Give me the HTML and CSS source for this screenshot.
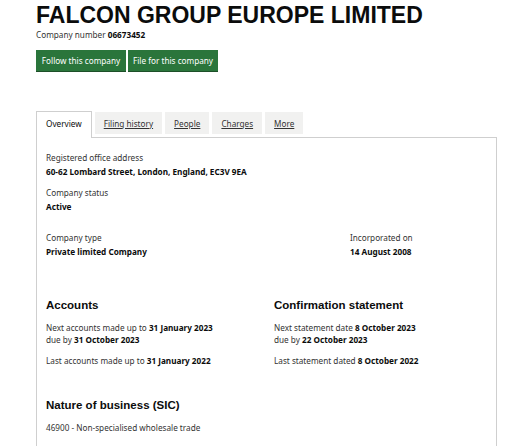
FILE: index.html
```html
<!DOCTYPE html>
<html lang="en">
<head>
<meta charset="utf-8">
<title>FALCON GROUP EUROPE LIMITED</title>
<link rel="stylesheet" href="styles.css">
</head>
<body>
<main class="page">
  <h1 class="title">FALCON GROUP EUROPE LIMITED</h1>
  <p class="company-number">Company number <strong>06673452</strong></p>
  <div class="actions">
    <a class="btn" href="#">Follow this company</a>
    <a class="btn" href="#">File for this company</a>
  </div>

  <nav class="tabs">
    <span class="tab tab-active">Overview</span>
    <a class="tab" href="#">Filing history</a>
    <a class="tab" href="#">People</a>
    <a class="tab" href="#">Charges</a>
    <a class="tab" href="#">More</a>
  </nav>

  <section class="panel">
    <dl class="field">
      <dt>Registered office address</dt>
      <dd>60-62 Lombard Street, London, England, EC3V 9EA</dd>
    </dl>
    <dl class="field field-status">
      <dt>Company status</dt>
      <dd>Active</dd>
    </dl>
    <div class="row-type">
      <dl class="field">
        <dt>Company type</dt>
        <dd>Private limited Company</dd>
      </dl>
      <dl class="field">
        <dt>Incorporated on</dt>
        <dd>14 August 2008</dd>
      </dl>
    </div>

    <div class="row-dates">
      <div class="col">
        <h2 class="heading">Accounts</h2>
        <p class="para">Next accounts made up to <strong>31 January 2023</strong><br>due by <strong>31 October 2023</strong></p>
        <p class="para para-last">Last accounts made up to <strong>31 January 2022</strong></p>
      </div>
      <div class="col">
        <h2 class="heading">Confirmation statement</h2>
        <p class="para">Next statement date <strong>8 October 2023</strong><br>due by <strong>22 October 2023</strong></p>
        <p class="para para-last">Last statement dated <strong>8 October 2022</strong></p>
      </div>
    </div>

    <h2 class="heading heading-sic">Nature of business (SIC)</h2>
    <p class="para sic">46900 - Non-specialised wholesale trade</p>
  </section>
</main>
</body>
</html>
```

FILE: styles.css
```css
* { box-sizing: border-box; }
html, body { margin: 0; padding: 0; background: #fff; }
body {
  font-family: "Noto Sans", "Liberation Sans", sans-serif;
  color: #0b0c0c;
}
.page { padding-left: 36px; width: 497px; }
.title {
  margin: 2px 0 0;
  font-family: "Liberation Sans", Arial, sans-serif;
  font-weight: 700;
  font-size: 23px;
  line-height: 26px;
  color: #0b0c0c;
}
.company-number {
  margin: 0;
  font-size: 8.2px;
  line-height: 14px;
  color: #333;
}
.company-number strong { color: #0b0c0c; }
.actions { display: flex; gap: 2px; margin-top: 8px; }
.btn {
  display: flex;
  align-items: center;
  justify-content: center;
  width: 90px;
  height: 21px;
  padding: 0;
  white-space: nowrap;
  background: #2a753b;
  color: #fff;
  font-size: 8.2px;
  text-decoration: none;
  box-shadow: 0 1px 0 #1d4f28;
}

.tabs {
  display: flex;
  align-items: flex-start;
  gap: 3px;
  margin-top: 40px;
  height: 26px;
  position: relative;
  z-index: 1;
}
.tab {
  margin-top: 1px;
  height: 22px;
  display: flex;
  align-items: center;
  padding: 0 9px;
  background: #f1f1f0;
  color: #333;
  font-size: 8.2px;
  white-space: nowrap;
  text-decoration: underline;
  text-underline-offset: 1px;
}
.tab-active {
  margin-top: 0;
  height: 27px;
  background: #fff;
  border: 1px solid #cfcfcf;
  border-bottom: none;
  text-decoration: none;
  color: #0b0c0c;
  padding: 0 9px 3px;
}

.panel {
  border: 1px solid #cfcfcf;
  border-bottom: none;
  padding: 13px 9px 20px;
  width: 461px;
}
.field { margin: 0; }
.field dt {
  font-size: 8.2px;
  line-height: 14px;
  color: #333;
}
.field dd {
  margin: 0;
  font-size: 8.2px;
  line-height: 14px;
  font-weight: 700;
}
.field-status { margin-top: 7px; }
.row-type {
  display: grid;
  grid-template-columns: 304px 1fr;
  margin-top: 17px;
}
.row-dates {
  display: grid;
  grid-template-columns: 228px 1fr;
  margin-top: 38px;
}
.heading {
  margin: 0;
  font-family: "Liberation Sans", Arial, sans-serif;
  font-weight: 700;
  font-size: 11.5px;
  line-height: 16px;
  color: #0b0c0c;
}
.para {
  margin: 9px 0 0;
  font-size: 8.2px;
  line-height: 12px;
  color: #333;
}
.para strong { color: #0b0c0c; }
.para-last { margin-top: 9px; }
.heading-sic { margin-top: 30px; }
.sic { margin-top: 8px; line-height: 14px; }
```
